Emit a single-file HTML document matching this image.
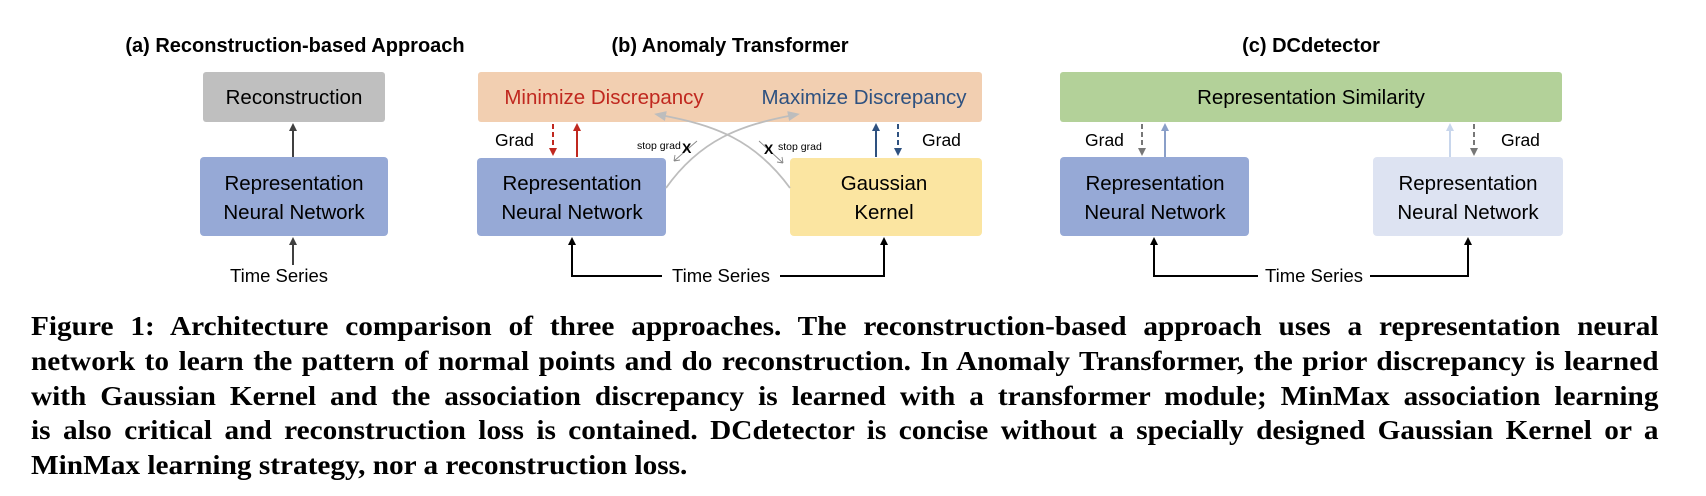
<!DOCTYPE html>
<html><head><meta charset="utf-8"><style>
body{margin:0;width:1706px;height:496px;background:#fff;overflow:hidden;position:relative}
svg{position:absolute;left:0;top:0}
.cap{position:absolute;left:31px;width:1500px;transform:scaleX(1.085);transform-origin:0 0;font-family:"Liberation Serif",serif;font-weight:bold;font-size:27px;color:#000}
.cap div{height:34.8px;line-height:34.8px;text-align:justify;text-align-last:justify;white-space:nowrap}
.cap div.l{text-align-last:left}
</style></head><body>
<svg width="1706" height="496" viewBox="0 0 1706 496" font-family="Liberation Sans, sans-serif">
<defs>
<marker id="ak" markerWidth="8" markerHeight="8" refX="4" refY="4" orient="auto" markerUnits="userSpaceOnUse"><path d="M0,0 L8,4 L0,8 z" fill="#000"/></marker>
<marker id="ag" markerWidth="8" markerHeight="8" refX="4" refY="4" orient="auto" markerUnits="userSpaceOnUse"><path d="M0,0 L8,4 L0,8 z" fill="#404040"/></marker>
<marker id="ar" markerWidth="8" markerHeight="8" refX="4" refY="4" orient="auto" markerUnits="userSpaceOnUse"><path d="M0,0 L8,4 L0,8 z" fill="#c0281f"/></marker>
<marker id="ab" markerWidth="8" markerHeight="8" refX="4" refY="4" orient="auto" markerUnits="userSpaceOnUse"><path d="M0,0 L8,4 L0,8 z" fill="#2e5180"/></marker>
<marker id="am" markerWidth="8" markerHeight="8" refX="4" refY="4" orient="auto" markerUnits="userSpaceOnUse"><path d="M0,0 L8,4 L0,8 z" fill="#777"/></marker>
<marker id="al" markerWidth="8" markerHeight="8" refX="4" refY="4" orient="auto" markerUnits="userSpaceOnUse"><path d="M0,0 L8,4 L0,8 z" fill="#8a9fc8"/></marker>
<marker id="ac" markerWidth="8" markerHeight="8" refX="4" refY="4" orient="auto" markerUnits="userSpaceOnUse"><path d="M0,0 L8,4 L0,8 z" fill="#c8d6ec"/></marker>
<marker id="ay" markerWidth="12" markerHeight="12" refX="6" refY="6" orient="auto" markerUnits="userSpaceOnUse"><path d="M0,1 L12,6 L0,11 z" fill="#bdbdbd"/></marker>
</defs>
<g font-weight="bold" font-size="20" text-anchor="middle">
<text x="295" y="52">(a) Reconstruction-based Approach</text>
<text x="730" y="52">(b) Anomaly Transformer</text>
<text x="1311" y="52">(c) DCdetector</text>
</g>
<rect x="203" y="72" width="182" height="50" rx="3" fill="#bfbfbf"/>
<rect x="200" y="157" width="188" height="79" rx="4" fill="#96a9d6"/>
<g font-size="20.5" text-anchor="middle">
<text x="294" y="104">Reconstruction</text>
<text x="294" y="190">Representation</text>
<text x="294" y="219">Neural Network</text>
</g>
<line x1="293" y1="157" x2="293" y2="127" stroke="#404040" stroke-width="2" marker-end="url(#ag)"/>
<line x1="293" y1="265" x2="293" y2="241" stroke="#404040" stroke-width="2" marker-end="url(#ag)"/>
<text x="279" y="282" font-size="18.5" text-anchor="middle">Time Series</text>
<rect x="478" y="72" width="504" height="50" rx="3" fill="#f2cfb1"/>
<text x="604" y="104" font-size="20.5" fill="#c0281f" text-anchor="middle">Minimize Discrepancy</text>
<text x="864" y="104" font-size="20.5" fill="#2e5180" text-anchor="middle">Maximize Discrepancy</text>
<rect x="477" y="158" width="189" height="78" rx="4" fill="#96a9d6"/>
<rect x="790" y="158" width="192" height="78" rx="4" fill="#fbe5a1"/>
<g font-size="20.5" text-anchor="middle">
<text x="572" y="190">Representation</text>
<text x="572" y="219">Neural Network</text>
<text x="884" y="190">Gaussian</text>
<text x="884" y="219">Kernel</text>
</g>
<line x1="553" y1="124" x2="553" y2="152" stroke="#c0281f" stroke-width="2" stroke-dasharray="5,3" marker-end="url(#ar)"/>
<line x1="577" y1="157" x2="577" y2="127" stroke="#c0281f" stroke-width="2" marker-end="url(#ar)"/>
<line x1="876" y1="157" x2="876" y2="127" stroke="#2e5180" stroke-width="2" marker-end="url(#ab)"/>
<line x1="898" y1="124" x2="898" y2="152" stroke="#2e5180" stroke-width="2" stroke-dasharray="5,3" marker-end="url(#ab)"/>
<text x="495" y="146" font-size="17.5">Grad</text>
<text x="922" y="146" font-size="17.5">Grad</text>
<path d="M666,188 C700,140 740,125 794,115" fill="none" stroke="#bdbdbd" stroke-width="1.8" marker-end="url(#ay)"/>
<path d="M790,188 C755,140 715,125 660,115" fill="none" stroke="#bdbdbd" stroke-width="1.8" marker-end="url(#ay)"/>
<g stroke="#888" stroke-width="0.9" fill="none">
<path d="M697,141 L674,161 M674,161 l6,-1 M674,161 l1,-6"/>
<path d="M759,141 L783,163 M783,163 l-6,-1 M783,163 l-1,-6"/>
</g>
<text x="637" y="149" font-size="10.5">stop grad</text>
<text x="682" y="153" font-size="14" font-weight="bold">X</text>
<text x="764" y="154" font-size="14" font-weight="bold">X</text>
<text x="778" y="150" font-size="10.5">stop grad</text>
<polyline points="572,276 572,241" fill="none" stroke="#000" stroke-width="2" marker-end="url(#ak)"/>
<polyline points="884,276 884,241" fill="none" stroke="#000" stroke-width="2" marker-end="url(#ak)"/>
<line x1="571" y1="276" x2="662" y2="276" stroke="#000" stroke-width="2"/>
<line x1="780" y1="276" x2="885" y2="276" stroke="#000" stroke-width="2"/>
<text x="721" y="282" font-size="18.5" text-anchor="middle">Time Series</text>
<rect x="1060" y="72" width="502" height="50" rx="3" fill="#b3d199"/>
<text x="1311" y="104" font-size="20.5" text-anchor="middle">Representation Similarity</text>
<rect x="1060" y="157" width="189" height="79" rx="4" fill="#96a9d6"/>
<rect x="1373" y="157" width="190" height="79" rx="4" fill="#dde3f2"/>
<g font-size="20.5" text-anchor="middle">
<text x="1155" y="190">Representation</text>
<text x="1155" y="219">Neural Network</text>
<text x="1468" y="190">Representation</text>
<text x="1468" y="219">Neural Network</text>
</g>
<line x1="1142" y1="124" x2="1142" y2="152" stroke="#777" stroke-width="2" stroke-dasharray="5,3" marker-end="url(#am)"/>
<line x1="1165" y1="157" x2="1165" y2="127" stroke="#8a9fc8" stroke-width="2" marker-end="url(#al)"/>
<line x1="1450" y1="157" x2="1450" y2="127" stroke="#c8d6ec" stroke-width="2" marker-end="url(#ac)"/>
<line x1="1474" y1="124" x2="1474" y2="152" stroke="#777" stroke-width="2" stroke-dasharray="5,3" marker-end="url(#am)"/>
<text x="1085" y="146" font-size="17.5">Grad</text>
<text x="1501" y="146" font-size="17.5">Grad</text>
<polyline points="1154,276 1154,241" fill="none" stroke="#000" stroke-width="2" marker-end="url(#ak)"/>
<polyline points="1468,276 1468,241" fill="none" stroke="#000" stroke-width="2" marker-end="url(#ak)"/>
<line x1="1153" y1="276" x2="1258" y2="276" stroke="#000" stroke-width="2"/>
<line x1="1370" y1="276" x2="1469" y2="276" stroke="#000" stroke-width="2"/>
<text x="1314" y="282" font-size="18.5" text-anchor="middle">Time Series</text>
</svg>
<div class="cap" style="top:309px">
<div>Figure 1: Architecture comparison of three approaches. The reconstruction-based approach uses a representation neural</div>
<div>network to learn the pattern of normal points and do reconstruction. In Anomaly Transformer, the prior discrepancy is learned</div>
<div>with Gaussian Kernel and the association discrepancy is learned with a transformer module; MinMax association learning</div>
<div>is also critical and reconstruction loss is contained. DCdetector is concise without a specially designed Gaussian Kernel or a</div>
<div class="l">MinMax learning strategy, nor a reconstruction loss.</div>
</div>
</body></html>
